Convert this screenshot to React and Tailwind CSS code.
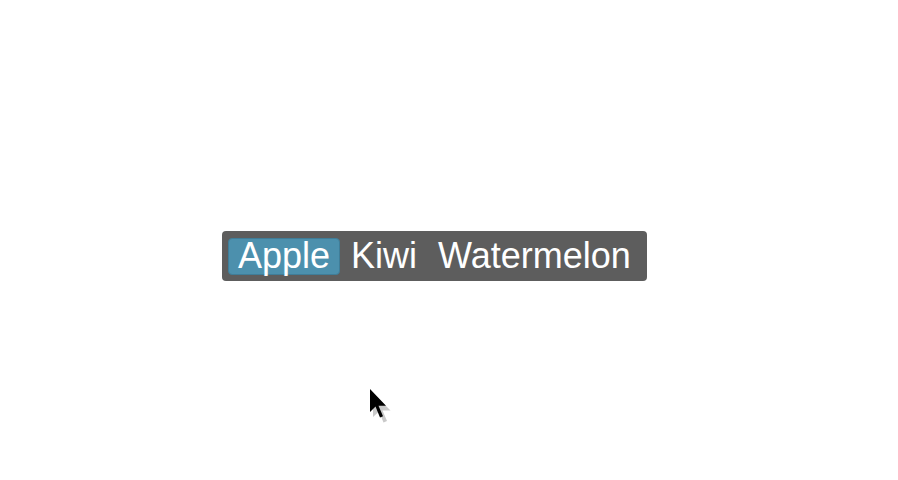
import React from "react";

const fruits = ["Apple", "Kiwi", "Watermelon"];

function Cursor() {
  return (
    <svg
      className="absolute left-[368px] top-[388px]"
      width="28"
      height="38"
      viewBox="0 0 28 38"
    >
      <polygon
        points="3,3 3,27 9,21.5 13.5,32.5 17,31 12.5,20.5 20.5,20.5"
        fill="#888"
        opacity="0.45"
        transform="translate(2,2)"
      />
      <polygon
        points="2,1 2,24 7.5,18.5 12,29.5 15,28.2 10.5,17.8 18,17.8"
        fill="#000"
      />
    </svg>
  );
}

export default function App() {
  const selected = 0;
  return (
    <div
      className="relative w-[898px] h-[480px] bg-white pl-[222px] pt-[231px]"
      style={{ fontFamily: '"Liberation Sans", Arial, sans-serif' }}
    >
      {/* segmented picker */}
      <div className="inline-flex items-center gap-[1px] h-[50px] px-[6px] bg-[#5d5d5d] rounded-[4px]">
        {fruits.map((f, idx) => (
          <div
            key={f}
            className={
              idx === selected
                ? "h-[37px] flex items-center px-[9px] bg-[#4c90ad] border border-[#3f7d98] rounded-[4px] text-white text-[36px] leading-none"
                : "h-[37px] flex items-center px-[10px] text-white text-[36px] leading-none"
            }
          >
            {f}
          </div>
        ))}
      </div>

      <Cursor />
    </div>
  );
}
